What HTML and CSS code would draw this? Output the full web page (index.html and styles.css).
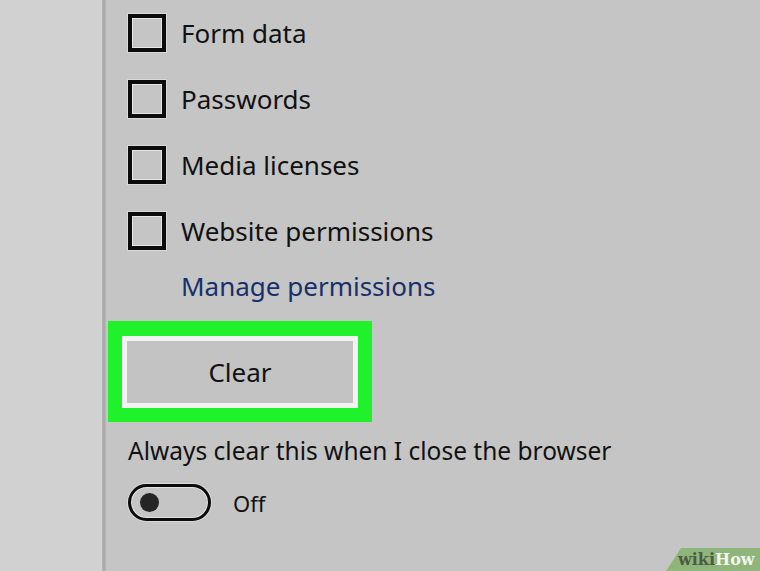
FILE: index.html
```html
<!DOCTYPE html>
<html lang="en">
<head>
    <meta charset="UTF-8">
    <meta name="viewport" content="width=device-width, initial-scale=1.0">
    <title>Clear browsing data</title>
    <link rel="stylesheet" href="styles.css">
</head>
<body>
    <div class="backdrop"></div>
    <div class="divider"></div>

    <div class="panel">
        <label class="option"><span class="box"></span>Form data</label>
        <label class="option"><span class="box"></span>Passwords</label>
        <label class="option"><span class="box"></span>Media licenses</label>
        <label class="option"><span class="box"></span>Website permissions</label>

        <a class="manage" href="#">Manage permissions</a>

        <div class="highlight">
            <button type="button" class="clear-btn">Clear</button>
        </div>

        <p class="always">Always clear this when I close the browser</p>

        <div class="toggle-row">
            <span class="toggle"><span class="knob"></span></span>
            <span class="toggle-label">Off</span>
        </div>
    </div>

    <div class="badge"><span class="wiki">wiki</span><span class="how">How</span></div>
</body>
</html>
```

FILE: styles.css
```css
body {
    margin: 0;
    height: 571px;
    overflow: hidden;
    display: flex;
    font-family: "Noto Sans", "Open Sans", Arial, sans-serif;
    color: #111;
    background-color: #c5c5c5;
}

.backdrop {
    width: 102px;
    background-color: #d1d1d1;
}

.divider {
    width: 4px;
    background: linear-gradient(to right, #b8b8b8, #a6a6a6, #bababa);
}

.panel {
    flex: 1;
    padding: 14px 0 0 22px;
}

.option {
    display: flex;
    align-items: center;
    gap: 15px;
    height: 38px;
    margin-bottom: 28px;
    font-size: 26px;
}

.box {
    box-sizing: border-box;
    width: 38px;
    height: 38px;
    border: 4px solid #0c0c0c;
    box-shadow: inset 0 0 0 1px #e6e6e6, 0 0 0 1px #dadada;
}

.manage {
    display: block;
    margin: -10px 0 0 53px;
    font-size: 26px;
    line-height: 36px;
    color: #17306b;
    text-decoration: none;
}

.highlight {
    width: 236px;
    margin: 17px 0 0 -20px;
    border: 14px solid #1ff22a;
    border-top-width: 15px;
}

.clear-btn {
    display: block;
    width: 100%;
    height: 72px;
    border: 5px solid #f3f3f3;
    background-color: #c3c3c3;
    font-family: inherit;
    font-size: 26px;
    color: #111;
}

.always {
    margin: 12px 0 0;
    font-size: 24.5px;
    line-height: 34px;
}

.toggle-row {
    display: flex;
    align-items: center;
    gap: 22px;
    margin-top: 16px;
}

.toggle {
    box-sizing: border-box;
    display: flex;
    align-items: center;
    width: 83px;
    height: 37px;
    padding-left: 9px;
    border: 3px solid #0c0c0c;
    border-radius: 19px;
    box-shadow: inset 0 0 0 1px #e2e2e2, 0 0 0 1px #dadada;
}

.knob {
    width: 19px;
    height: 19px;
    border-radius: 50%;
    background-color: #252525;
}

.toggle-label {
    font-size: 22px;
}

.badge {
    position: absolute;
    right: 0;
    bottom: 0;
    width: 82px;
    height: 23px;
    padding-left: 12px;
    background-color: #8fb67a;
    clip-path: polygon(15px 0, 100% 0, 100% 100%, 0 100%);
    font-family: "DejaVu Serif", "Liberation Serif", serif;
    font-weight: bold;
    font-size: 16px;
    line-height: 24px;
}

.wiki {
    color: #4d5a45;
}

.how {
    color: #f2f5ee;
}
```
